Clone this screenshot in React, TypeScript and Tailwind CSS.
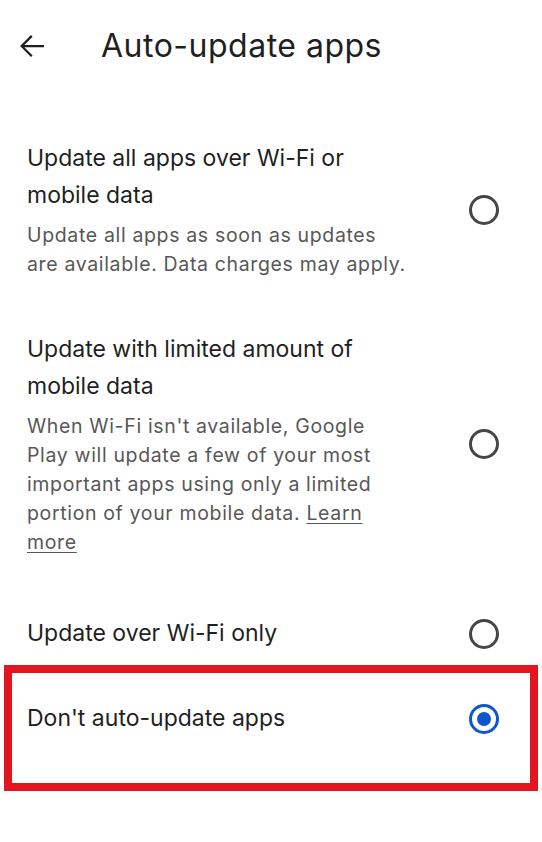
import React from 'react';

type Option = {
  title: React.ReactNode;
  desc?: React.ReactNode;
};

const Radio: React.FC<{ selected?: boolean }> = ({ selected }) =>
  selected ? (
    <div className="w-[30px] h-[30px] rounded-full border-[3px] border-[#0b57d0] flex items-center justify-center shrink-0">
      <div className="w-[14px] h-[14px] rounded-full bg-[#0b57d0]" />
    </div>
  ) : (
    <div className="w-[30px] h-[30px] rounded-full border-[3px] border-[#444746] shrink-0" />
  );

const OptionText: React.FC<Option> = ({ title, desc }) => (
  <div className="flex flex-col">
    <div className="text-[23px] leading-[37px] text-[#1f1f1f]">{title}</div>
    {desc && (
      <div className="mt-[7px] text-[19.5px] leading-[29px] tracking-[0.65px] text-[#575757]">{desc}</div>
    )}
  </div>
);

const App: React.FC = () => {
  return (
    <div className="w-[542px] min-h-[842px] bg-white font-['Inter',sans-serif]">
      {/* Top bar */}
      <div className="h-[92px] flex items-center pl-[14px]">
        <svg width="36" height="36" viewBox="0 0 24 24" className="text-[#1f1f1f]">
          <path fill="currentColor" d="M20 11.25H6.9l5.5-5.5L11.35 4.7 4.05 12l7.3 7.3 1.05-1.05-5.5-5.5H20v-1.5z" />
        </svg>
        <h1 className="ml-[51px] text-[32px] leading-[40px] tracking-[0.5px] text-[#1f1f1f]">Auto-update apps</h1>
      </div>

      {/* Options */}
      <div className="mt-[48px] flex items-center justify-between pl-[27px] pr-[43px]">
        <OptionText
          title={<>Update all apps over Wi-Fi or<br />mobile data</>}
          desc={<>Update all apps as soon as updates<br />are available. Data charges may apply.</>}
        />
        <Radio />
      </div>

      <div className="mt-[52px] flex items-center justify-between pl-[27px] pr-[43px]">
        <OptionText
          title={<>Update with limited amount of<br />mobile data</>}
          desc={
            <>
              When Wi-Fi isn't available, Google<br />
              Play will update a few of your most<br />
              important apps using only a limited<br />
              portion of your mobile data.{' '}
              <span className="underline underline-offset-[3px]">Learn</span>
              <br />
              <span className="underline underline-offset-[3px]">more</span>
            </>
          }
        />
        <Radio />
      </div>

      <div className="mt-[58px] flex items-center justify-between pl-[27px] pr-[43px]">
        <OptionText title="Update over Wi-Fi only" />
        <Radio />
      </div>

      {/* Selected option, outlined */}
      <div className="mt-[13px] mx-[4px] border-[8px] border-[#e3161f] pt-[27px] pb-[46px] pl-[15px] pr-[31px] flex items-center justify-between">
        <OptionText title="Don't auto-update apps" />
        <Radio selected />
      </div>
    </div>
  );
};

export default App;
